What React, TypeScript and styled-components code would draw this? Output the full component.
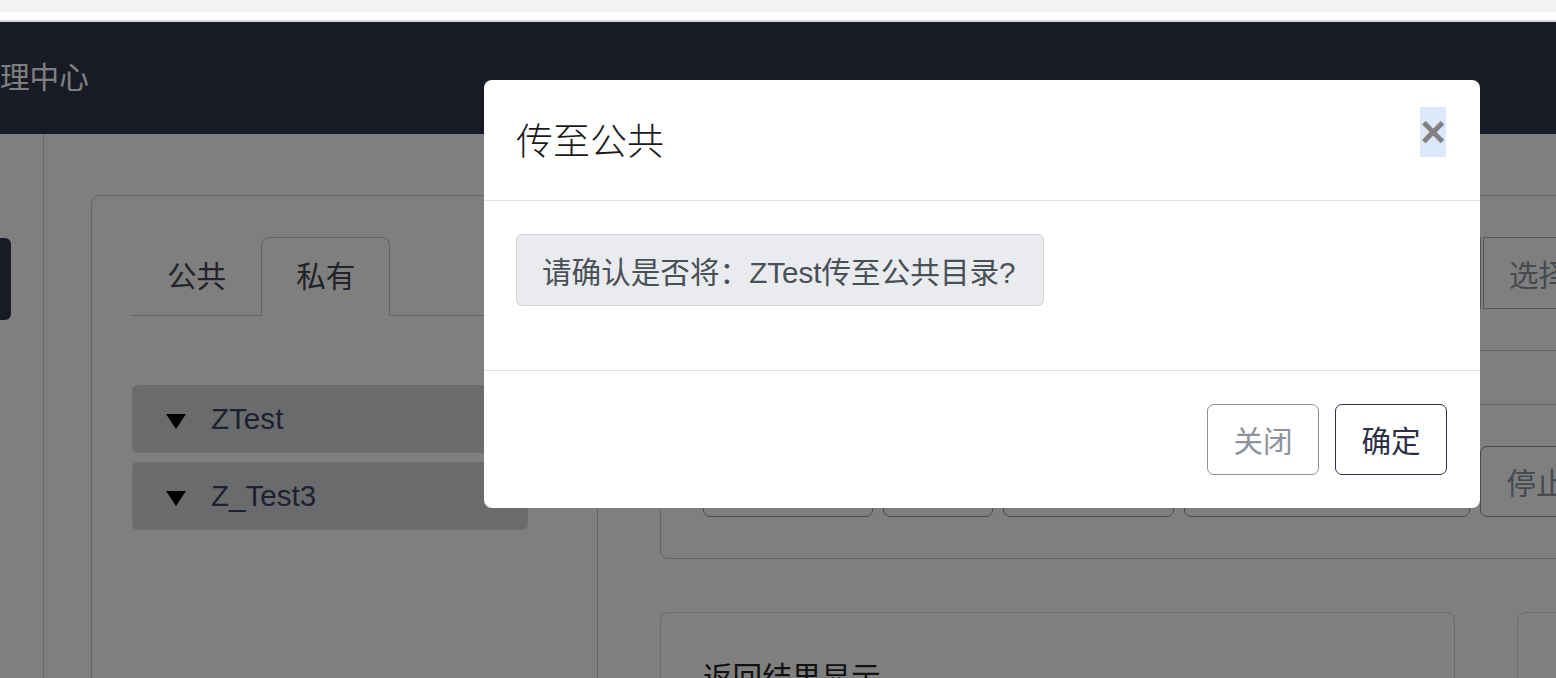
import React from 'react';
import styled, { createGlobalStyle } from 'styled-components';

const GlobalStyle = createGlobalStyle`
  html, body {
    margin: 0;
    padding: 0;
    height: 678px;
    overflow: hidden;
    background: #ffffff;
    font-family: "Liberation Sans", "Noto Sans CJK SC", sans-serif;
  }
  * {
    box-sizing: border-box;
  }
`;

const TopStrip = styled.div`
  height: 22px;
  background: #ffffff;
  border-top: 12px solid #f1f2f4;
  border-bottom: 2px solid #d6d7db;
`;

const Page = styled.div`
  position: relative;
  height: 656px;
  overflow: hidden;
  background: #ffffff;
`;

const Header = styled.div`
  height: 112px;
  background: #30344a;
  display: flex;
  align-items: center;
`;

const HeaderTitle = styled.div`
  color: #ffffff;
  font-size: 29.6px;
  line-height: 1;
  margin-top: 0;
`;

const Body = styled.div`
  display: flex;
  height: 544px;
`;

const Sidebar = styled.div`
  width: 44px;
  flex-shrink: 0;
  border-right: 1px solid #d2d2d2;
  padding-top: 104px;
`;

const SideMarker = styled.div`
  width: 11px;
  height: 82px;
  background: #30344a;
  border-radius: 0 6px 6px 0;
`;

const Main = styled.div`
  display: flex;
  gap: 62px;
  padding: 61px 0 0 47px;
  flex-shrink: 0;
`;

const LeftCard = styled.div`
  width: 507px;
  height: 600px;
  border: 1px solid #cccccc;
  border-radius: 8px;
  padding: 41px 40px;
  flex-shrink: 0;
`;

const Tabs = styled.div`
  display: flex;
  border-bottom: 1px solid #c8c8c8;
  margin-right: -1px;
`;

const Tab = styled.div<{ $active?: boolean }>`
  height: 79px;
  padding: 0 34px 5px;
  display: flex;
  align-items: center;
  font-size: 29.6px;
  color: #444650;
  border: 1px solid ${(p) => (p.$active ? '#c8c8c8' : 'transparent')};
  border-bottom: none;
  border-radius: 8px 8px 0 0;
  background: ${(p) => (p.$active ? '#ffffff' : 'transparent')};
  margin-bottom: -1px;
`;

const Tree = styled.div`
  margin-top: 69px;
  display: flex;
  flex-direction: column;
  gap: 9px;
  width: 396px;
`;

const TreeRow = styled.div`
  height: 68px;
  background: #d4d6da;
  border-radius: 6px;
  display: flex;
  align-items: center;
  padding-left: 34px;
  gap: 25px;
  font-size: 29.6px;
  color: #3e4260;
`;

const Caret = styled.span`
  width: 0;
  height: 0;
  border-left: 10.5px solid transparent;
  border-right: 10.5px solid transparent;
  border-top: 15px solid #000000;
  margin-top: 4px;
`;

const RightColumn = styled.div`
  width: 1036px;
  flex-shrink: 0;
  display: flex;
  flex-direction: column;
  gap: 53px;
`;

const Card = styled.div`
  border: 1px solid #cccccc;
  border-radius: 8px;
  padding: 41px 42px;
`;

const InputGroup = styled.div`
  display: flex;
  height: 72px;
`;

const Input = styled.div`
  flex: 1;
  border: 1px solid #a8adb5;
  border-radius: 6px 0 0 6px;
`;

const GroupButton = styled.div`
  width: 170px;
  border: 1px solid #a8adb5;
  margin-left: 2px;
  border-radius: 0 6px 6px 0;
  display: flex;
  align-items: center;
  padding-left: 25px;
  font-size: 29.6px;
  color: #8d939c;
`;

const ButtonRow = styled.div`
  display: flex;
  gap: 10px;
`;

const OutlineButton = styled.div<{ $dark?: boolean; $w?: number }>`
  width: ${(p) => (p.$w ? `${p.$w}px` : 'auto')};
  height: 71px;
  padding: 0 26px;
  display: flex;
  align-items: center;
  justify-content: center;
  border: 1.5px solid ${(p) => (p.$dark ? '#2c2f45' : '#8d939c')};
  border-radius: 7px;
  font-size: 29.6px;
  color: ${(p) => (p.$dark ? '#2c2f45' : '#8d939c')};
  white-space: nowrap;
  flex-shrink: 0;
  background: #ffffff;
`;

const BottomRow = styled.div`
  display: flex;
  gap: 62px;
`;

const ResultCard = styled.div<{ $width: number }>`
  width: ${(p) => p.$width}px;
  height: 200px;
  border: 1px solid #d6d6d6;
  border-radius: 8px;
  padding: 41px 42px;
  font-size: 29.6px;
  color: #222222;
  flex-shrink: 0;
`;

const Backdrop = styled.div`
  position: absolute;
  inset: 0;
  background: rgba(0, 0, 0, 0.5);
`;

const Modal = styled.div`
  position: absolute;
  top: 58px;
  left: 484px;
  width: 996px;
  height: 428px;
  background: #ffffff;
  border-radius: 8px;
  display: flex;
  flex-direction: column;
  overflow: hidden;
`;

const ModalHeader = styled.div`
  height: 121px;
  border-bottom: 1px solid #dee2e6;
  display: flex;
  align-items: center;
  justify-content: space-between;
  padding: 0 34px 0 32px;
`;

const ModalTitle = styled.div`
  font-family: "Noto Sans CJK SC", sans-serif;
  font-weight: 300;
  font-size: 37px;
  color: #1a1a1a;
  margin-top: -2px;
`;

const CloseButton = styled.div`
  width: 26px;
  height: 50px;
  background: #dde8fa;
  display: flex;
  align-items: center;
  justify-content: center;
  font-family: "Liberation Sans", sans-serif;
  font-weight: 700;
  font-size: 44px;
  line-height: 1;
  color: #808080;
  margin-top: -16px;
`;

const ModalBody = styled.div`
  height: 170px;
  border-bottom: 1px solid #dee2e6;
  padding: 33px 32px 0;
`;

const Alert = styled.div`
  display: inline-flex;
  align-items: center;
  height: 72px;
  padding: 0 27px 0 25px;
  background: #e9ebee;
  border: 1.5px solid #d0d3d8;
  border-radius: 6px;
  font-size: 29.6px;
  color: #495057;
`;

const ModalFooter = styled.div`
  flex: 1;
  display: flex;
  justify-content: flex-end;
  align-items: flex-start;
  gap: 16px;
  padding: 33px 33px 0 0;
`;

const FooterButton = styled(OutlineButton)`
  width: 112px;
  padding: 0;
`;

const App: React.FC = () => {
  return (
    <>
      <GlobalStyle />
      <TopStrip />
      <Page>
        <Header>
          <HeaderTitle>理中心</HeaderTitle>
        </Header>
        <Body>
          <Sidebar>
            <SideMarker />
          </Sidebar>
          <Main>
            <LeftCard>
              <Tabs>
                <Tab>公共</Tab>
                <Tab $active>私有</Tab>
              </Tabs>
              <Tree>
                <TreeRow>
                  <Caret />
                  ZTest
                </TreeRow>
                <TreeRow>
                  <Caret />
                  Z_Test3
                </TreeRow>
              </Tree>
            </LeftCard>
            <RightColumn>
              <Card>
                <InputGroup>
                  <Input />
                  <GroupButton>选择文件</GroupButton>
                </InputGroup>
              </Card>
              <Card>
                <ButtonRow>
                  <OutlineButton $w={170}>开始训练</OutlineButton>
                  <OutlineButton $w={110}>暂停</OutlineButton>
                  <OutlineButton $w={171}>继续训练</OutlineButton>
                  <OutlineButton $w={286}>查看训练日志信息</OutlineButton>
                  <OutlineButton $w={112}>停止</OutlineButton>
                </ButtonRow>
              </Card>
              <BottomRow>
                <ResultCard $width={795}>返回结果显示</ResultCard>
                <ResultCard $width={400} />
              </BottomRow>
            </RightColumn>
          </Main>
        </Body>
        <Backdrop />
        <Modal>
          <ModalHeader>
            <ModalTitle>传至公共</ModalTitle>
            <CloseButton>×</CloseButton>
          </ModalHeader>
          <ModalBody>
            <Alert>请确认是否将：ZTest传至公共目录?</Alert>
          </ModalBody>
          <ModalFooter>
            <FooterButton>关闭</FooterButton>
            <FooterButton $dark>确定</FooterButton>
          </ModalFooter>
        </Modal>
      </Page>
    </>
  );
};

export default App;
